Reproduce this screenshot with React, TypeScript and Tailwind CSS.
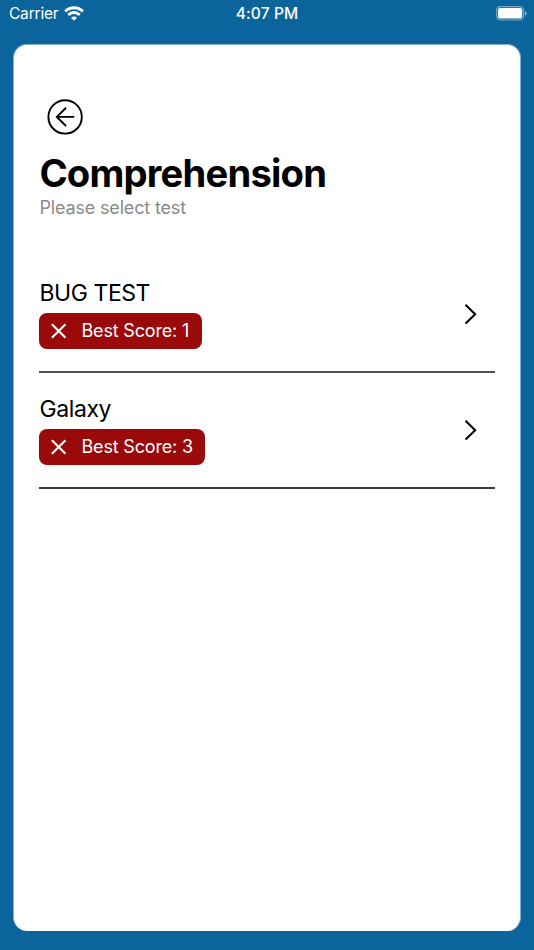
const tests = [
  { name: 'BUG TEST', score: 1, nameClass: 'tracking-[-0.45px]', badge: 'w-[163px]', line: 'border-[#505050]' },
  { name: 'Galaxy', score: 3, nameClass: 'tracking-[-0.4px]', badge: 'w-[166px]', line: 'border-[#3a383b]' },
];

function StatusBar() {
  return (
    <header className="grid h-[28px] grid-cols-3 items-center pl-[9px] pr-[7px] text-[15.5px] leading-[28px] text-white">
      <div className="flex items-center gap-[6px]">
        <span className="tracking-[-0.2px]">Carrier</span>
        <svg className="-mt-[2px]" width="20" height="15" viewBox="0 0 20 15" fill="none" stroke="currentColor" strokeWidth="2.9">
          <path d="M1.2 5.4a12.5 12.5 0 0 1 17.6 0" />
          <path d="M4.3 8.9a8 8 0 0 1 11.4 0" />
          <path d="M10 14.7l-3-3a4.2 4.2 0 0 1 6 0z" fill="currentColor" stroke="none" />
        </svg>
      </div>
      <span className="pr-[2px] text-center font-medium tracking-[0.15px]">4:07 PM</span>
      <svg className="-mt-[2px] justify-self-end" width="31" height="15" viewBox="0 0 31 15" fill="none">
        <rect x="0.6" y="0.6" width="27" height="13.4" rx="3.8" stroke="#fff" strokeOpacity=".45" strokeWidth="1.2" />
        <rect x="2" y="2" width="24.2" height="10.6" rx="2.2" fill="#fff" />
        <path d="M29 5v4.8c1-.4 1.7-1.3 1.7-2.4S30 5.4 29 5z" fill="#fff" fillOpacity=".5" />
      </svg>
    </header>
  );
}

export default function App() {
  return (
    <div className="flex h-[950px] w-[534px] flex-col bg-[#0b659c] font-['Inter','Liberation_Sans',sans-serif]">
      <StatusBar />
      <main className="mx-[13px] mb-[19px] mt-[16px] flex-1 rounded-[14px] border border-b-0 border-[#85b2ce] bg-white px-[25px] pt-[54px] text-black">
        <button className="ml-[8px] block" aria-label="Back">
          <svg width="36" height="36" viewBox="0 0 36 36" fill="none" stroke="currentColor" strokeWidth="1.9">
            <circle cx="18.1" cy="17.9" r="16.7" />
            <path d="M27.3 17.9H9.6M19 8.8L9.8 17.9l9.200 9.100" />
          </svg>
        </button>
        <h1 className="mt-[15px] whitespace-nowrap pl-[0.4px] text-[38.2px] font-bold leading-[46px] tracking-[-0.8px]">Comprehension</h1>
        <p className="pl-[0.4px] text-[18px] leading-[23px] tracking-[-0.16px] text-[#8a8a8a]">Please select test</p>
        <ul className="mt-[60px]">
          {tests.map((t) => (
            <li key={t.name} className={`mb-[22px] flex h-[94px] items-start justify-between border-b-2 ${t.line}`}>
              <div>
                <h2 className={`pl-[0.5px] text-[23px] leading-[28px] ${t.nameClass}`}>{t.name}</h2>
                <div className={`mt-[6px] flex h-[36px] items-center rounded-[8px] bg-[#9a0a0b] pl-[12px] text-white ${t.badge}`}>
                  <svg width="16" height="16" viewBox="0 0 16 16" fill="none" stroke="currentColor" strokeWidth="2.1">
                    <path d="M.9 1.2l13.6 13.6M14.5 1.2L.9 14.8" />
                  </svg>
                  <span className="ml-[14.5px] whitespace-nowrap text-[18px] leading-[24px] tracking-[-0.17px]">Best Score: {t.score}</span>
                </div>
              </div>
              <svg className="mr-[18px] mt-[25px]" width="13" height="21" viewBox="0 0 13 21" fill="none" stroke="currentColor" strokeWidth="2.1">
                <path d="M1.5.8l9.700 9.400L1.500 19.600" />
              </svg>
            </li>
          ))}
        </ul>
      </main>
    </div>
  );
}
